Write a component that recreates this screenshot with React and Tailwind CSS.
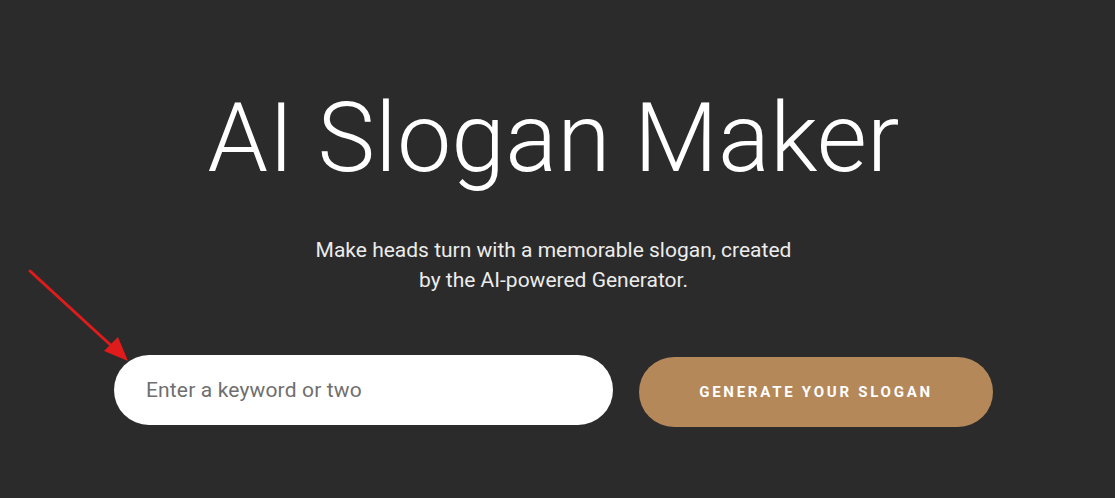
export default function App() {
  return (
    <div
      className="relative min-h-[498px] w-full bg-[#2b2b2b] overflow-hidden"
      style={{ fontFamily: 'Roboto, "Liberation Sans", sans-serif' }}
    >
      <div className="flex flex-col items-center pt-[82px] pr-[8px]">
        <h1 className="text-[97px] font-light leading-[112px] text-white">
          AI Slogan Maker
        </h1>
        <p className="mt-[41px] w-[490px] text-center text-[21px] leading-[30px] text-[#ececec]">
          Make heads turn with a memorable slogan, created by the AI-powered Generator.
        </p>

        <div className="mt-[60px] flex items-start gap-[26px]">
          <input
            type="text"
            placeholder="Enter a keyword or two"
            className="h-[70px] w-[499px] rounded-full bg-white pl-[32px] text-[21px] tracking-[0.15px] text-[#333] placeholder:text-[#6f6f6f] outline-none"
          />
          <button className="mt-[2px] h-[70px] w-[354px] rounded-full bg-[#b5885a] text-[15px] font-bold uppercase tracking-[2.75px] text-white">
            Generate your slogan
          </button>
        </div>
      </div>

      {/* arrow pointing at the input */}
      <svg
        className="absolute left-0 top-0"
        width="160"
        height="380"
        viewBox="0 0 160 380"
      >
        <line x1="30" y1="271" x2="116" y2="350" stroke="#e01b1b" strokeWidth="3" strokeLinecap="round" />
        <polygon points="128,361 104,351 118,337" fill="#e01b1b" />
      </svg>
    </div>
  );
}
